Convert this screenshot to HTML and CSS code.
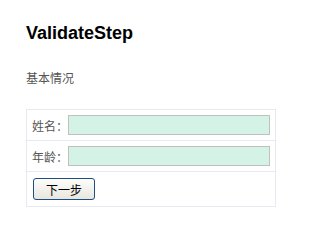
FILE: index.html
```html
<!DOCTYPE html>
<html>
<head>
<meta charset="utf-8">
<link rel="stylesheet" href="styles.css">
</head>
<body>
<div class="page">
  <h1 class="title">ValidateStep</h1>
  <p class="section">基本情况</p>
  <div class="form">
    <div class="row">
      <span class="label">姓名：</span>
      <input class="field" type="text">
    </div>
    <div class="row">
      <span class="label">年龄：</span>
      <input class="field" type="text">
    </div>
    <div class="row actions">
      <button class="btn" type="button">下一步</button>
    </div>
  </div>
</div>
</body>
</html>
```
FILE: styles.css
```css
html, body {
  margin: 0;
  padding: 0;
  background: #fff;
}
.page {
  padding: 23px 0 0 26px;
  font-family: "Liberation Sans", Arial, "Noto Sans CJK SC", sans-serif;
}
.title {
  margin: 0;
  font-size: 18px;
  font-weight: bold;
  line-height: 21px;
  color: #000;
}
.section {
  margin: 28px 0 0 0;
  font-size: 12px;
  line-height: 14px;
  color: #555;
}
.form {
  margin-top: 23px;
  width: 248px;
  border: 1px solid #e8e8f0;
}
.row {
  display: flex;
  align-items: center;
  height: 30px;
  padding: 0 5px;
  border-top: 1px solid #e8e8f0;
}
.row:first-child {
  border-top: none;
}
.label {
  width: 36px;
  font-size: 12px;
  color: #555;
  font-family: "Noto Sans CJK SC", sans-serif;
  white-space: nowrap;
}
.field {
  box-sizing: border-box;
  width: 202px;
  height: 20px;
  margin: 0;
  padding: 0;
  border: 1px solid #c0c0c0;
  background: #d4f2e6;
}
.actions {
  height: 34px;
}
.btn {
  box-sizing: border-box;
  width: 62px;
  height: 22px;
  margin: 0 0 0 1px;
  padding: 0;
  border: 1px solid #1d4f7f;
  border-radius: 3px;
  background: linear-gradient(#fdfdfb, #e8e6de);
  font-size: 12px;
  color: #000;
  font-family: "Noto Sans CJK SC", sans-serif;
}
```
